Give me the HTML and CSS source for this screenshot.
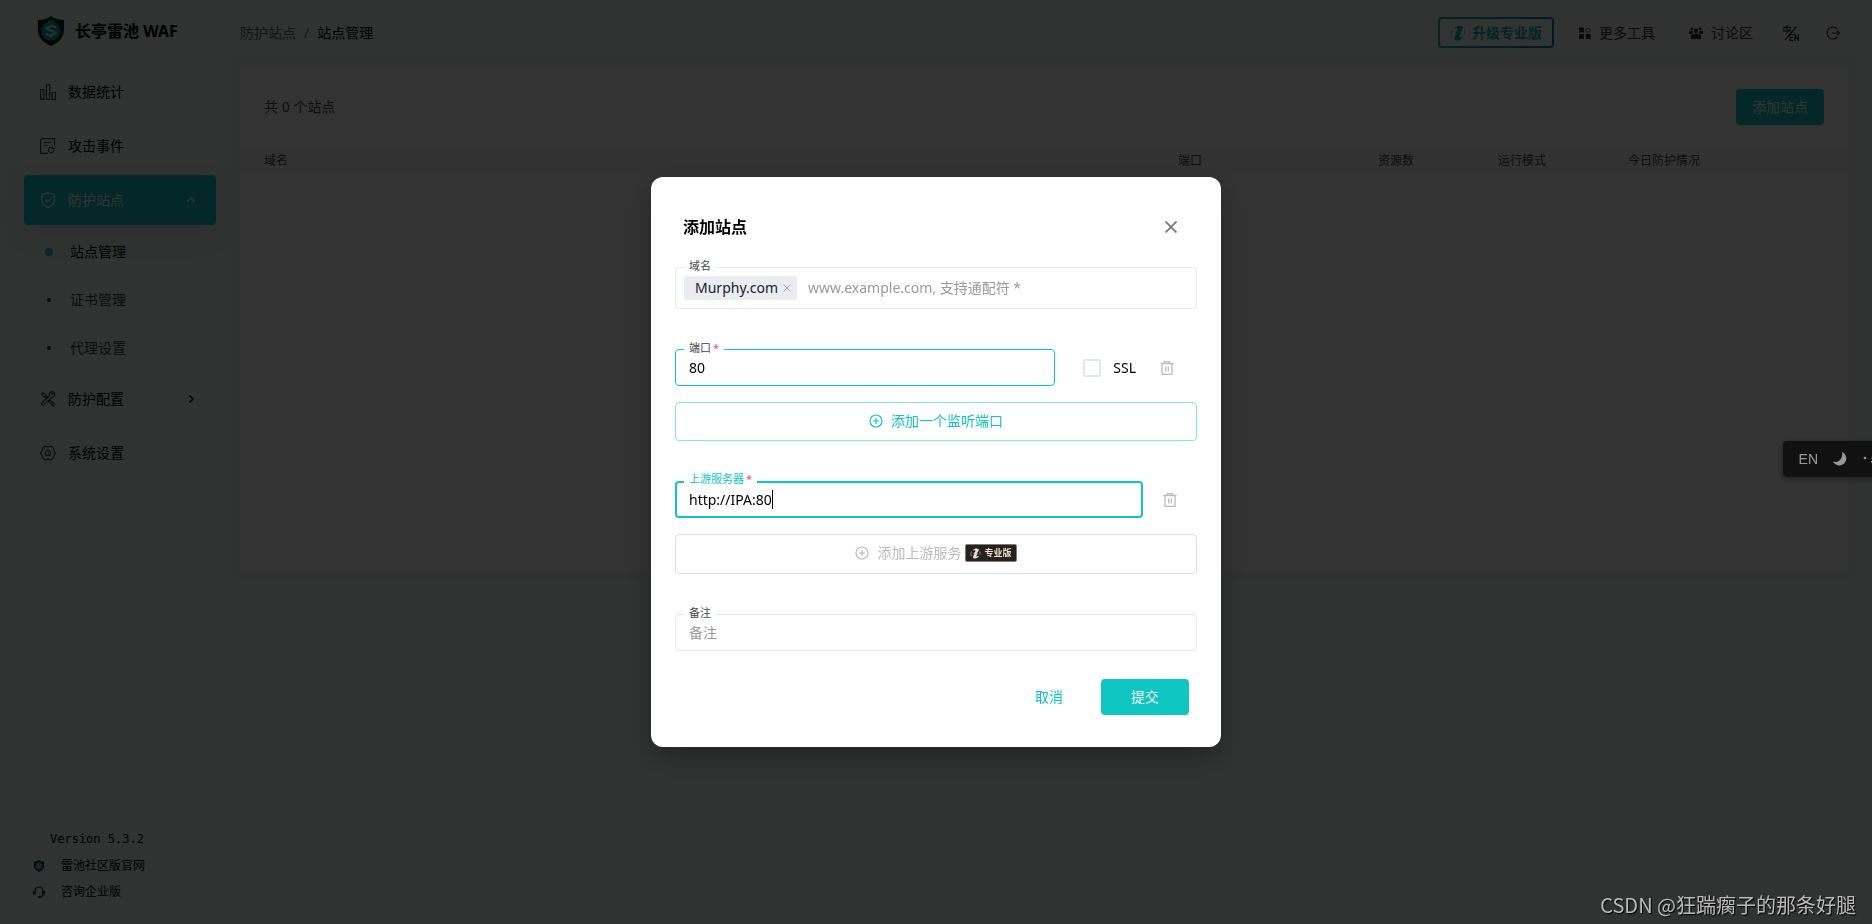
FILE: index.html
```
<!DOCTYPE html>
<html lang="zh-CN">
<head>
  <meta charset="UTF-8">
  <meta name="viewport" content="width=device-width, initial-scale=1.0">
  <title>长亭雷池 WAF</title>
  <link rel="stylesheet" href="styles.css">
</head>
<body>
  <svg class="sprite" aria-hidden="true">
    <symbol id="shield-logo" viewBox="0 0 28 30">
      <path d="M14 0 C10 3 5 4 1 4 V14 C1 22 7 27 14 30 C21 27 27 22 27 14 V4 C23 4 18 3 14 0Z" fill="#1c2020"/>
      <circle cx="14" cy="15" r="9.5" fill="#0fa39f"/>
      <path d="M11 5.5h6M14 4v3" stroke="#0fc6c2" stroke-width="1.5"/>
      <path d="M19 11.5 L14.5 9.5 L9.5 12.5 L18.5 16.5 L14 20 L9 18" fill="none" stroke="#d8e6e4" stroke-width="2.4" stroke-linejoin="round"/>
    </symbol>
    <symbol id="pro-mark" viewBox="0 0 16 16">
      <path d="M4 3.5 C6 .8 10 0 12.500 1.500 C13 4 12 6 9.500 8 L12 8 C10.500 9.500 9 11 9 12.300 C10.500 12.500 12 12 13.500 11 C12 14.500 8 16.500 5 14.800 C3.500 13 5 10.500 7 8.500 L4.500 8.500 C6 7 8 5.500 8 4 C7 3.200 5.500 3.200 4 3.500Z" fill="currentColor"/>
      <path d="M2.500 5C1 7 1 10 2.500 12M14 5C14.900 6.500 14.900 8 14.400 9.500" fill="none" stroke="currentColor" stroke-width="1.500" opacity=".5"/>
    </symbol>
    <symbol id="trash" viewBox="0 0 14 14">
      <path d="M.5 2.500h13M4.500 2V.7h5V2M2 2.500v11h10v-11M5.700 5.500v5M8.300 5.500v5" fill="none" stroke="currentColor" stroke-width="1.300"/>
    </symbol>
    <symbol id="plus-circle" viewBox="0 0 14 14">
      <path d="M7 1a6 6 0 1 0 0 12a6 6 0 0 0 0-12M7 4v6M4 7h6" fill="none" stroke="currentColor" stroke-width="1.200"/>
    </symbol>
  </svg>

  <div class="app">
    <aside class="sidebar">
      <div class="brand">
        <svg width="28" height="30"><use href="#shield-logo"/></svg>
        <span>长亭雷池 WAF</span>
      </div>
      <nav class="menu">
        <a class="menu-item" href="#">
          <svg width="16" height="16" viewBox="0 0 16 16"><path d="M.6 5.500h3.300v9.900H.6zM6.400.6h3.300v14.800H6.400zM12.100 8.500h3.300v6.900h-3.300z"/></svg>
          数据统计
        </a>
        <a class="menu-item" href="#">
          <svg width="16" height="16" viewBox="0 0 16 16"><path d="M14.400 8V.6H2L.6 2v13.400H8M3.800 4.500h7.500M3.800 7.500h4M12.500 9.400a2.800 2.800 0 1 0 1.500 2.600M12.500 8.500v2h2.800"/></svg>
          攻击事件
        </a>
        <a class="menu-item active" href="#">
          <svg width="16" height="16" viewBox="0 0 16 16"><path d="M8 .7L14.300 3v5.500c0 3.500-3 5.800-6.300 6.900c-3.300-1.100-6.300-3.400-6.300-6.900V3zM5 8l2.200 2.200L11 6.400"/></svg>
          防护站点
          <svg class="arrow" width="10" height="10" viewBox="0 0 10 10"><path d="M1.500 6.500L5 3l3.500 3.500"/></svg>
        </a>
        <div class="sub-menu">
          <a class="sub-item current" href="#">站点管理</a>
          <a class="sub-item" href="#">证书管理</a>
          <a class="sub-item" href="#">代理设置</a>
        </div>
        <a class="menu-item" href="#">
          <svg width="16" height="16" viewBox="0 0 16 16"><path d="M1.500 3L3 1.500l2.500 1.800L6 5l1.700 1.700L6.700 7.700 5 6 3.300 5.500zM9.300 8.700l5 4.300c.8 1-.8 2.600-1.700 1.700L8.300 10M14.500 4.500c.6-1 .4-2 0-3L12.600 3.400 11.500 2.400 13 .8C11 .2 8.800 1.500 9.300 4.500L1.800 12c-1 1.200.9 3.200 2.200 2.100L11.500 6.600c1.200.2 2.500-.8 3-2.100z"/></svg>
          防护配置
          <svg class="arrow" width="10" height="10" viewBox="0 0 10 10"><path d="M3.500 1.500L7 5L3.500 8.500"/></svg>
        </a>
        <a class="menu-item" href="#">
          <svg width="16" height="16" viewBox="0 0 16 16"><path d="M5 1.200L8 1.800L11 1.200L13 2.800L14 5.500L15.400 8L14 10.500L13 13.200L11 14.800L8 14.200L5 14.800L3 13.200L2 10.500L.6 8L2 5.500L3 2.800zM8 5.400a2.600 2.600 0 1 0 0 5.200a2.600 2.600 0 0 0 0-5.200M8 8h1"/></svg>
          系统设置
        </a>
      </nav>
      <div class="sidebar-footer">
        <div class="version">Version 5.3.2</div>
        <a href="#"><svg width="12" height="12" viewBox="0 0 28 30"><use href="#shield-logo" width="28" height="30"/></svg>雷池社区版官网</a>
        <a href="#">
          <svg width="12" height="12" viewBox="0 0 12 12"><path d="M2 8V5a4 4 0 0 1 8 0v3c0 1.500-1.500 3-4 3" fill="none" stroke="#222" stroke-width="1.200"/><path d="M0 5h2.500v3.500H0zM9.500 5H12v3.500H9.500zM5 10h2.500v2H5z" fill="#222"/></svg>
          咨询企业版
        </a>
      </div>
    </aside>

    <main class="main">
      <header class="topbar">
        <div class="breadcrumb"><a href="#">防护站点</a><span>/</span><b>站点管理</b></div>
        <div class="actions">
          <button class="upgrade" type="button"><svg width="16" height="16"><use href="#pro-mark"/></svg>升级专业版</button>
          <button class="tool" type="button">
            <svg width="12" height="12" viewBox="0 0 12 12"><path d="M0 .5h5v5H0zM0 7h5v5H0zM6.700 7h5v5h-5z" fill="#333"/><path d="M9 .7L11.500 3.200L9 5.700L6.500 3.200z" fill="none" stroke="#333"/></svg>
            更多工具
          </button>
          <button class="tool" type="button">
            <svg width="14" height="12" viewBox="0 0 14 12" fill="#333"><circle cx="3" cy="1.700" r="1.500"/><circle cx="11" cy="1.700" r="1.500"/><circle cx="7" cy="3.800" r="2.300"/><path d="M0 7V5c0-1 1-1.500 3.500-1.300C4 5.500 4 6.500 3.500 7zM14 7V5c0-1-1-1.500-3.500-1.300C10 5.500 10 6.500 10.500 7zM2 12V9c0-1.500 1.500-2.200 5-2.200S12 7.500 12 9v3z"/></svg>
            讨论区
          </button>
          <button class="round" type="button" aria-label="中/EN">
            <svg width="16" height="16" viewBox="0 0 16 16" fill="none" stroke="#333" stroke-width="1.200"><path d="M.8 2.300h6.400v3.600H.8zM4 0v8.500M13.500 1.500L2 15M10.300 9.700H7v5.600h3.300M7 12.500h3.200M12 15.800V9.700l3.300 5.600V9.200"/></svg>
          </button>
          <button class="round" type="button" aria-label="退出">
            <svg width="14" height="14" viewBox="0 0 14 14" fill="none" stroke="#333" stroke-width="1.200"><path d="M11.500 3A6 6 0 1 0 11.500 11M5.500 7h8M11 4.800L13.300 7L11 9.200"/></svg>
          </button>
        </div>
      </header>
      <section class="card">
        <div class="card-head">
          <span>共 0 个站点</span>
          <button class="btn-primary" type="button">添加站点</button>
        </div>
        <table class="site-table">
          <colgroup><col><col class="col-port"><col class="col-count"><col class="col-mode"><col class="col-today"></colgroup>
          <thead>
            <tr><th>域名</th><th>端口</th><th>资源数</th><th>运行模式</th><th>今日防护情况</th></tr>
          </thead>
        </table>
      </section>
    </main>
  </div>

  <div class="overlay">
    <form class="dialog" role="dialog" aria-labelledby="dialog-title">
      <div class="dialog-head">
        <h2 id="dialog-title">添加站点</h2>
        <button class="icon-btn" type="button" aria-label="关闭">
          <svg width="12" height="12" viewBox="0 0 12 12"><path d="M.5.500l11 11M11.500.500l-11 11" stroke="#777" stroke-width="1.800"/></svg>
        </button>
      </div>

      <div class="field domain">
        <label for="domain">域名</label>
        <span class="tag">Murphy.com
          <svg width="8" height="8" viewBox="0 0 8 8"><path d="M.5.500l7 7M7.500.500l-7 7" stroke="#a4a8ac"/></svg>
        </span>
        <input id="domain" type="text" placeholder="www.example.com, 支持通配符 *">
      </div>

      <div class="row">
        <div class="field filled">
          <label for="port">端口<i>*</i></label>
          <input id="port" type="text" value="80">
        </div>
        <label class="ssl"><input type="checkbox">SSL</label>
        <button class="icon-btn trash" type="button" aria-label="删除端口"><svg width="14" height="14"><use href="#trash"/></svg></button>
      </div>
      <button class="add-btn" type="button"><svg width="14" height="14"><use href="#plus-circle"/></svg>添加一个监听端口</button>

      <div class="row">
        <div class="field focused">
          <label for="upstream">上游服务器<i>*</i></label>
          <input id="upstream" type="text" value="http://IPA:80">
          <span class="caret"></span>
        </div>
        <button class="icon-btn trash" type="button" aria-label="删除上游"><svg width="14" height="14"><use href="#trash"/></svg></button>
      </div>
      <button class="add-btn" type="button" disabled>
        <svg width="14" height="14"><use href="#plus-circle"/></svg>添加上游服务
        <span class="pro"><svg width="11" height="11"><use href="#pro-mark"/></svg>专业版</span>
      </button>

      <div class="field remark">
        <label for="remark">备注</label>
        <input id="remark" type="text" placeholder="备注">
      </div>

      <div class="dialog-foot">
        <button class="btn-text" type="button">取消</button>
        <button class="btn-primary" type="submit">提交</button>
      </div>
    </form>
  </div>

  <div class="float-bar">
    <span>EN</span>
    <svg width="14" height="14" viewBox="0 0 14 14"><path d="M9 0A7 7 0 1 1 0 9.500C5 11.500 10.500 6.500 9 0Z" fill="#999"/></svg>
    <svg width="16" height="14" viewBox="0 0 16 14" fill="#999"><circle cx="3" cy="6" r="1.300"/><path d="M9 6l2-1 1 1-2 1zM9 9h3v1.500H9z"/></svg>
  </div>
  <div class="watermark">CSDN @狂踹瘸子的那条好腿</div>
</body>
</html>
```
FILE: styles.css
```
* {
  box-sizing: border-box;
}
body {
  margin: 0;
  font-family: "Noto Sans", "Noto Sans CJK SC", sans-serif;
  font-size: 14px;
  line-height: 20px;
  color: #000;
  background-color: #f2faf7;
  overflow: hidden;
}
button, input {
  font: inherit;
  color: inherit;
}
button {
  border: 0;
  padding: 0;
  background: none;
}
a {
  color: inherit;
  text-decoration: none;
}
.sprite {
  position: absolute;
  width: 0;
  height: 0;
}
.app {
  display: flex;
  gap: 24px;
  min-height: 100vh;
  padding: 0 24px;
  background-color: #f2faf7;
}

/* sidebar */
.sidebar {
  display: flex;
  flex-direction: column;
  width: 192px;
  padding-bottom: 19px;
}
.brand {
  display: flex;
  align-items: center;
  gap: 10px;
  height: 67px;
  padding: 0 0 6px 13px;
  font-size: 16px;
  font-weight: bold;
}
.menu {
  display: flex;
  flex-direction: column;
  flex: 1;
}
.menu-item {
  display: flex;
  align-items: center;
  gap: 12px;
  height: 50px;
  margin-bottom: 4px;
  padding: 0 20px 0 16px;
  border-radius: 4px;
}
.menu-item svg {
  fill: none;
  stroke: #444;
  stroke-width: 1.2;
}
.menu-item .arrow {
  margin-left: auto;
  stroke: #000;
  stroke-width: 1.5;
}
.menu-item.active {
  margin-bottom: 3px;
  color: #fff;
  background-color: #0fc6c2;
  box-shadow: 0 10px 25px rgba(60, 100, 180, 0.15);
}
.menu-item.active svg {
  stroke: #fff;
}
.sub-menu {
  margin-bottom: 2px;
}
.sub-item {
  display: flex;
  align-items: center;
  gap: 17px;
  height: 48px;
  padding-left: 21px;
  color: #444;
}
.sub-item::before {
  content: "";
  width: 4px;
  height: 4px;
  margin: 0 2px;
  border-radius: 50%;
  background-color: #333;
}
.sub-item.current {
  color: #000;
}
.sub-item.current::before {
  width: 8px;
  height: 8px;
  margin: 0;
  background-color: #0fc6c2;
}
.sidebar-footer {
  font-size: 12px;
  line-height: 26px;
}
.sidebar-footer a {
  display: flex;
  align-items: center;
  gap: 16px;
  padding-left: 9px;
}
.version {
  margin-bottom: 1px;
  padding-left: 26px;
  font-family: "DejaVu Sans Mono", monospace;
}

/* main area */
.main {
  flex: 1;
}
.topbar {
  display: flex;
  align-items: center;
  justify-content: space-between;
  height: 65px;
}
.breadcrumb {
  display: flex;
  gap: 8px;
  color: #666;
}
.breadcrumb b {
  font-weight: normal;
  color: #000;
}
.actions {
  display: flex;
  align-items: center;
  gap: 16px;
  padding-right: 2px;
}
.upgrade {
  display: flex;
  align-items: center;
  justify-content: center;
  gap: 6px;
  width: 116px;
  height: 31px;
  border: 2px solid transparent;
  border-radius: 4px;
  font-weight: bold;
  color: #0fb5b5;
  background: linear-gradient(#f8fdfc, #f8fdfc) padding-box, linear-gradient(90deg, #1fb58f, #0a6fc0) border-box;
}
.tool {
  display: flex;
  align-items: center;
  gap: 8px;
  height: 32px;
  padding: 0 9px;
  border-radius: 4px;
  color: #333;
  background-color: #f8fbfa;
}
.round {
  display: flex;
  align-items: center;
  justify-content: center;
  width: 26px;
  height: 26px;
  border-radius: 50%;
  background-color: #f8fbfa;
}
.card {
  height: 508px;
  border-radius: 4px;
  background-color: #fff;
  box-shadow: 0 0 12px rgba(140, 60, 80, 0.08);
}
.card-head {
  display: flex;
  align-items: center;
  justify-content: space-between;
  height: 84px;
  padding: 0 24px;
  color: #444;
}
.btn-primary {
  width: 88px;
  height: 36px;
  border-radius: 4px;
  color: #fff;
  background-color: #0fc6c2;
}
.site-table {
  width: 100%;
  table-layout: fixed;
  border-collapse: collapse;
  font-size: 12px;
}
.site-table th {
  height: 24px;
  padding: 0 0 0 24px;
  font-weight: normal;
  text-align: left;
  color: #444;
  background-color: #f8f9fa;
}
.col-port {
  width: 200px;
}
.col-count {
  width: 120px;
}
.col-mode {
  width: 130px;
}
.col-today {
  width: 244px;
}

/* dialog */
.overlay {
  position: fixed;
  inset: 0;
  display: flex;
  align-items: center;
  justify-content: center;
  background-color: rgba(0, 0, 0, 0.8);
}
.dialog {
  width: 570px;
  padding: 32px 24px;
  border-radius: 12px;
  background-color: #fff;
  box-shadow: 0 10px 30px rgba(0, 0, 0, 0.3);
}
.dialog-head {
  display: flex;
  align-items: center;
  justify-content: space-between;
  height: 36px;
  margin-bottom: 22px;
  padding: 0 20px 0 8px;
}
.dialog-head h2 {
  margin: 0;
  font-size: 16px;
}
.icon-btn {
  display: flex;
}
.row {
  display: flex;
  align-items: center;
  margin-top: 40px;
}
.field {
  position: relative;
  display: flex;
  align-items: center;
  flex: 1;
  height: 37px;
  padding: 0 13px;
  border: 1px solid #e3e7ef;
  border-radius: 4px;
}
.field > label {
  position: absolute;
  top: -11px;
  left: 8px;
  padding: 0 5px;
  font-size: 11px;
  line-height: 18px;
  color: #444;
  background-color: #fff;
}
.field i {
  margin-left: 2px;
  font-style: normal;
  color: #f64e6a;
}
.field input {
  flex: 1;
  min-width: 0;
  padding: 0;
  border: 0;
  outline: 0;
  background: none;
}
.field input::placeholder {
  color: #999;
}
.field.filled {
  border-color: #0fc6c2;
}
.field.focused {
  padding: 0 12px;
  border: 2px solid #0fc6c2;
}
.field.focused > label {
  top: -13px;
  left: 7px;
  color: #0fc6c2;
}
.field.focused input {
  flex: none;
  field-sizing: content;
}
.caret {
  width: 1px;
  height: 19px;
  background-color: #000;
}
.field.domain {
  height: 42px;
  padding: 0 8px;
}
.field.remark {
  margin-top: 40px;
}
.tag {
  display: flex;
  align-items: center;
  gap: 5px;
  height: 24px;
  margin-right: 11px;
  padding: 0 6px 0 11px;
  border-radius: 3px;
  color: #222;
  background-color: #e9ecf1;
}
.ssl {
  display: flex;
  align-items: center;
  gap: 12px;
  margin-left: 28px;
}
.ssl input {
  appearance: none;
  width: 18px;
  height: 18px;
  margin: 0;
  border: 2px solid #e3e7ef;
  border-radius: 2px;
}
.trash {
  margin: 0 20px;
  color: #bbb;
}
.ssl + .trash {
  margin: 0 23px 0 24px;
}
.add-btn {
  display: flex;
  align-items: center;
  justify-content: center;
  gap: 8px;
  width: 100%;
  height: 39px;
  margin-top: 16px;
  padding-bottom: 2px;
  border: 1px solid #87e3e0;
  border-radius: 4px;
  color: #0fc6c2;
}
.add-btn:disabled {
  height: 40px;
  border-color: #ddd;
  color: #bbb;
}
.pro {
  display: flex;
  align-items: center;
  gap: 3px;
  height: 18px;
  margin-left: -4px;
  padding: 0 4px;
  border: 1px solid #8f7565;
  border-radius: 2px;
  font-size: 9px;
  font-weight: bold;
  color: #f3d9c8;
  background-color: #222;
}
.dialog-foot {
  display: flex;
  align-items: center;
  justify-content: flex-end;
  gap: 38px;
  margin-top: 28px;
  padding-right: 8px;
}
.btn-text {
  color: #0fc6c2;
}

/* extras over the page */
.float-bar {
  position: fixed;
  top: 441px;
  right: -6px;
  display: flex;
  align-items: center;
  gap: 15px;
  height: 36px;
  padding-left: 16px;
  border-radius: 4px;
  font-family: "Liberation Sans", sans-serif;
  color: #999;
  background-color: #111;
  box-shadow: 0 2px 6px rgba(0, 0, 0, 0.4);
}
.watermark {
  position: fixed;
  right: 16px;
  bottom: 5px;
  font-family: "Noto Sans CJK SC", sans-serif;
  font-size: 20px;
  line-height: 28px;
  color: #bbb;
  text-shadow: 1px 1px 1px #000;
}
```
